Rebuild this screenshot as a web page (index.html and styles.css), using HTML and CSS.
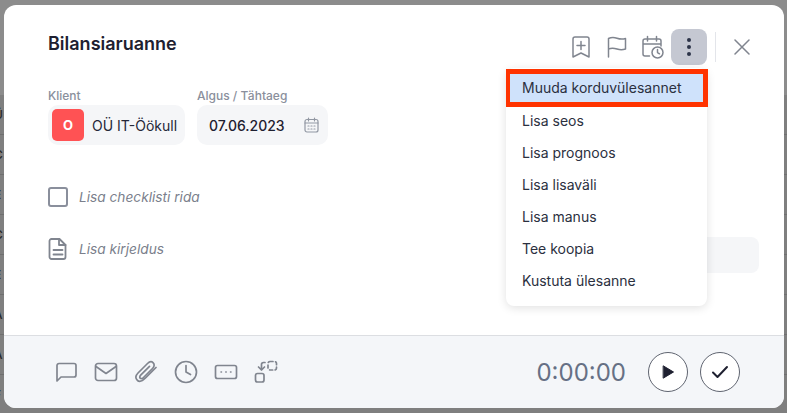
FILE: index.html
```html
<!DOCTYPE html>
<html>
<head>
    <meta charset="UTF-8">
    <title>Bilansiaruanne</title>
    <link rel="stylesheet" href="styles.css">
</head>
<body>
    <!-- table behind the overlay, only its left edge shows -->
    <div class="backdrop">
        <div class="bg-head"></div>
        <div class="bg-row">Ü</div>
        <div class="bg-row">C</div>
        <div class="bg-row">E</div>
        <div class="bg-row">C</div>
        <div class="bg-row">E</div>
        <div class="bg-row">A</div>
        <div class="bg-row">A</div>
        <div class="bg-row">F</div>
    </div>

    <div class="modal">
        <div class="modal-body">
            <div class="top">
                <h1>Bilansiaruanne</h1>
                <div class="actions">
                    <svg class="act" width="24" height="24" viewBox="0 0 24 24"><path d="M4 4a2 2 0 0 1 2-2h12a2 2 0 0 1 2 2v18l-8-4-8 4z"/><path d="M12 6.500v8M8 10.500h8"/></svg>
                    <svg class="act" width="24" height="24" viewBox="0 0 24 24"><path d="M3.500 22V3.500c3-1.500 6-1.200 8.500-.3s5.500 1.200 8.500.3V14c-3 1-6 .8-8.500 0s-5.500-1.200-8.500 0"/></svg>
                    <svg class="act" width="24" height="24" viewBox="0 0 24 24"><path d="M8.500 21H4a2 2 0 0 1-2-2V6a2 2 0 0 1 2-2h14a2 2 0 0 1 2 2v5M2 9h18M6.500 1.500V6M15.500 1.500V6"/><circle cx="16.500" cy="17.500" r="5.500"/><path d="M16.500 14.500v3l2 1.300"/></svg>
                    <div class="more">
                        <span></span><span></span><span></span>
                    </div>
                    <div class="divider"></div>
                    <svg class="close" width="16" height="16" viewBox="0 0 16 16"><path d="M1 1l14 14M15 1L1 15"/></svg>
                </div>
            </div>

            <div class="fields">
                <div class="field">
                    <label>Klient</label>
                    <div class="box client">
                        <span class="avatar">O</span>
                        <span>OÜ IT-Öökull</span>
                    </div>
                </div>
                <div class="field">
                    <label>Algus / Tähtaeg</label>
                    <div class="box date">
                        <span>07.06.2023</span>
                        <svg class="cal" width="15" height="16" viewBox="0 0 15 16"><rect x="1" y="2.500" width="13" height="12.500" rx="2"/><path d="M1 6h13M4.500 1v3M10.500 1v3M4 9h1M7 9h1M10 9h1M4 12h1M7 12h1M10 12h1"/></svg>
                    </div>
                </div>
            </div>

            <div class="line check-line">
                <span class="checkbox"></span>
                <em>Lisa checklisti rida</em>
            </div>
            <div class="line desc-line">
                <svg width="20" height="24" viewBox="0 0 20 24"><path d="M3.500 2h8l6 6v12a2 2 0 0 1-2 2h-12a2 2 0 0 1-2-2V4a2 2 0 0 1 2-2z"/><path d="M11 2v6h6.500M5.500 13h9M5.500 17.500h9"/></svg>
                <em>Lisa kirjeldus</em>
                <div class="desc-field"></div>
            </div>
        </div>

        <div class="footer">
            <div class="tools">
                <svg width="24" height="24" viewBox="0 0 24 24"><path d="M3 21V5.500a2 2 0 0 1 2-2h15a2 2 0 0 1 2 2V15a2 2 0 0 1-2 2H7z"/></svg>
                <svg width="24" height="24" viewBox="0 0 24 24"><rect x="1.500" y="3.500" width="21" height="17" rx="2.500"/><path d="M2 6.500l10 7 10-7"/></svg>
                <svg width="24" height="24" viewBox="0 0 24 24"><path d="M22 7.500 11.500 18c-2.500 2.500-5.500 4.500-8 2.500S1.500 15.500 4 13L13.500 3.500c1.800-1.800 4.200-2.200 5.700-.7s1.100 3.900-.7 5.700L9.500 17.500c-1.100 1.100-2.500 1.500-3.300.7s-.4-2.200.7-3.300L15.500 6.300"/></svg>
                <svg width="24" height="24" viewBox="0 0 24 24"><circle cx="12" cy="12" r="10.500"/><path d="M12 5.500V12l4.500 2.500"/></svg>
                <svg width="24" height="24" viewBox="0 0 24 24"><rect x="1.500" y="5.500" width="21" height="13" rx="2"/><path class="dots" d="M7 12h.5M11.750 12h.5M16.500 12h.5"/></svg>
                <svg width="24" height="24" viewBox="0 0 24 24"><rect x="1.500" y="13.500" width="8.500" height="8.500" rx="2"/><path d="M11 2.500H9.500a2 2 0 0 0-2 2V10M4.500 7l3 3 3-3"/><rect class="dash" x="14" y="1.500" width="8.500" height="8.500" rx="2"/></svg>
            </div>
            <div class="timer">0:00:00</div>
            <button class="round"><svg width="14" height="14" viewBox="0 0 14 14"><path class="solid" d="M2.500 1l10 6-10 6z"/></svg></button>
            <button class="round"><svg width="18" height="14" viewBox="0 0 18 14"><path class="tick" d="M2 7.500 6.500 12 16 2"/></svg></button>
        </div>

        <div class="menu">
            <div class="menu-item selected">Muuda korduvülesannet</div>
            <div class="menu-item">Lisa seos</div>
            <div class="menu-item">Lisa prognoos</div>
            <div class="menu-item">Lisa lisaväli</div>
            <div class="menu-item">Lisa manus</div>
            <div class="menu-item">Tee koopia</div>
            <div class="menu-item">Kustuta ülesanne</div>
        </div>
    </div>
</body>
</html>
```

FILE: styles.css
```css
* {
    box-sizing: border-box;
}
html, body {
    margin: 0;
    height: 100%;
    overflow: hidden;
}
body {
    font-family: Inter, "Liberation Sans", sans-serif;
    background-color: #7f7f7f;
    color: #1e2030;
}
svg {
    display: block;
    fill: none;
    stroke: #80858f;
    stroke-width: 1.8;
    stroke-linecap: round;
    stroke-linejoin: round;
}
.backdrop {
    height: 100%;
    overflow: hidden;
}
.bg-head {
    height: 95px;
    background-color: #8c8c8c;
}
.bg-row {
    height: 40px;
    line-height: 40px;
    margin-left: -6px;
    font-size: 12px;
    font-weight: 500;
    color: #2a2a2a;
    border-bottom: 1px solid #6f6f6f;
}
.modal {
    position: absolute;
    left: 4px;
    top: 5px;
    width: 780px;
    height: 403px;
    display: flex;
    flex-direction: column;
    background: white;
    border-radius: 12px;
    overflow: hidden;
}
.modal-body {
    flex: 1;
    padding: 0 34px 0 44px;
}
.top {
    display: flex;
    justify-content: space-between;
    height: 60px;
}
h1 {
    margin: 28px 0 0;
    font-size: 18px;
    line-height: 22px;
    font-weight: 600;
}
.actions {
    display: flex;
    align-items: center;
    height: 36px;
    margin-top: 24px;
}
.act {
    margin-right: 12px;
    stroke-width: 1.5;
}
.actions .act:nth-child(3) {
    margin-right: 6px;
}
.more {
    width: 36px;
    height: 36px;
    display: flex;
    flex-direction: column;
    align-items: center;
    justify-content: center;
    gap: 3px;
    background-color: #c5c8d2;
    border-radius: 8px;
}
.more span {
    width: 4px;
    height: 4px;
    border-radius: 50%;
    background-color: #2c3348;
}
.divider {
    width: 1px;
    height: 30px;
    margin: 0 18px 0 8px;
    background-color: #e3e5ea;
}
.close {
    stroke-width: 1.5;
}
.fields {
    display: flex;
    gap: 12px;
    margin-top: 23px;
}
.field label {
    display: block;
    font-size: 12px;
    line-height: 16px;
    font-weight: 500;
    color: #8a8f9c;
    margin-bottom: 1px;
}
.box {
    display: flex;
    align-items: center;
    height: 40px;
    background-color: #f5f6f8;
    border-radius: 10px;
    font-size: 14px;
}
.client {
    width: 137px;
    padding-left: 4px;
    gap: 8px;
    white-space: nowrap;
    color: #252838;
}
.avatar {
    width: 32px;
    height: 32px;
    display: flex;
    align-items: center;
    justify-content: center;
    border-radius: 5px;
    background-color: #ff5254;
    color: white;
    font-size: 13px;
    font-weight: 700;
}
.date {
    width: 131px;
    padding: 0 9px 0 12px;
    justify-content: space-between;
    font-weight: 500;
}
.cal {
    stroke: #9298a3;
    stroke-width: 1.2;
}
.line {
    display: flex;
    align-items: center;
    font-size: 13.700px;
    color: #7b7f8c;
}
.line em {
    font-style: italic;
}
.check-line {
    margin-top: 40px;
    gap: 11px;
    height: 24px;
}
.checkbox {
    width: 20px;
    height: 20px;
    border: 2px solid #8a8f9c;
    border-radius: 3px;
}
.desc-line {
    margin-top: 22px;
    height: 36px;
    gap: 11px;
}
.desc-field {
    width: 240px;
    height: 36px;
    margin: 12px -9px 0 auto;
    background-color: #f5f6f8;
    border-radius: 8px;
}
.footer {
    display: flex;
    align-items: center;
    height: 73px;
    padding: 0 44px 0 50px;
    background-color: #f4f6f9;
    border-top: 1px solid #dcdee2;
}
.tools {
    display: flex;
    gap: 16px;
}
.tools svg {
    stroke-width: 1.700;
}
.tools .dots {
    stroke-width: 1.500;
}
.tools .dash {
    stroke-dasharray: 3 2.500;
}
.timer {
    margin-left: auto;
    margin-right: 22px;
    font-size: 24px;
    color: #667085;
}
.round {
    width: 40px;
    height: 40px;
    margin-left: 12px;
    display: flex;
    align-items: center;
    justify-content: center;
    padding: 0;
    background: white;
    border: 1px solid #5f6470;
    border-radius: 50%;
}
.round:first-of-type {
    margin-left: 0;
}
.solid {
    fill: #1e2030;
    stroke: #1e2030;
    stroke-width: 1;
}
.tick {
    stroke: #1e2030;
    stroke-width: 2;
}
.menu {
    position: absolute;
    left: 502px;
    top: 63px;
    width: 201px;
    height: 238px;
    padding-top: 4px;
    background: white;
    border-radius: 8px;
    box-shadow: 0 2px 10px rgba(0, 0, 0, 0.12);
}
.menu-item {
    height: 32px;
    line-height: 32px;
    padding-left: 16px;
    font-size: 14px;
    color: #2b3040;
}
.menu-item.selected {
    height: 38px;
    line-height: 28px;
    margin-top: -3px;
    margin-right: -1px;
    margin-bottom: -2px;
    padding-left: 12px;
    background-color: #cfe2fb;
    border: 5px solid #ff3300;
    border-left-width: 4px;
}
```
